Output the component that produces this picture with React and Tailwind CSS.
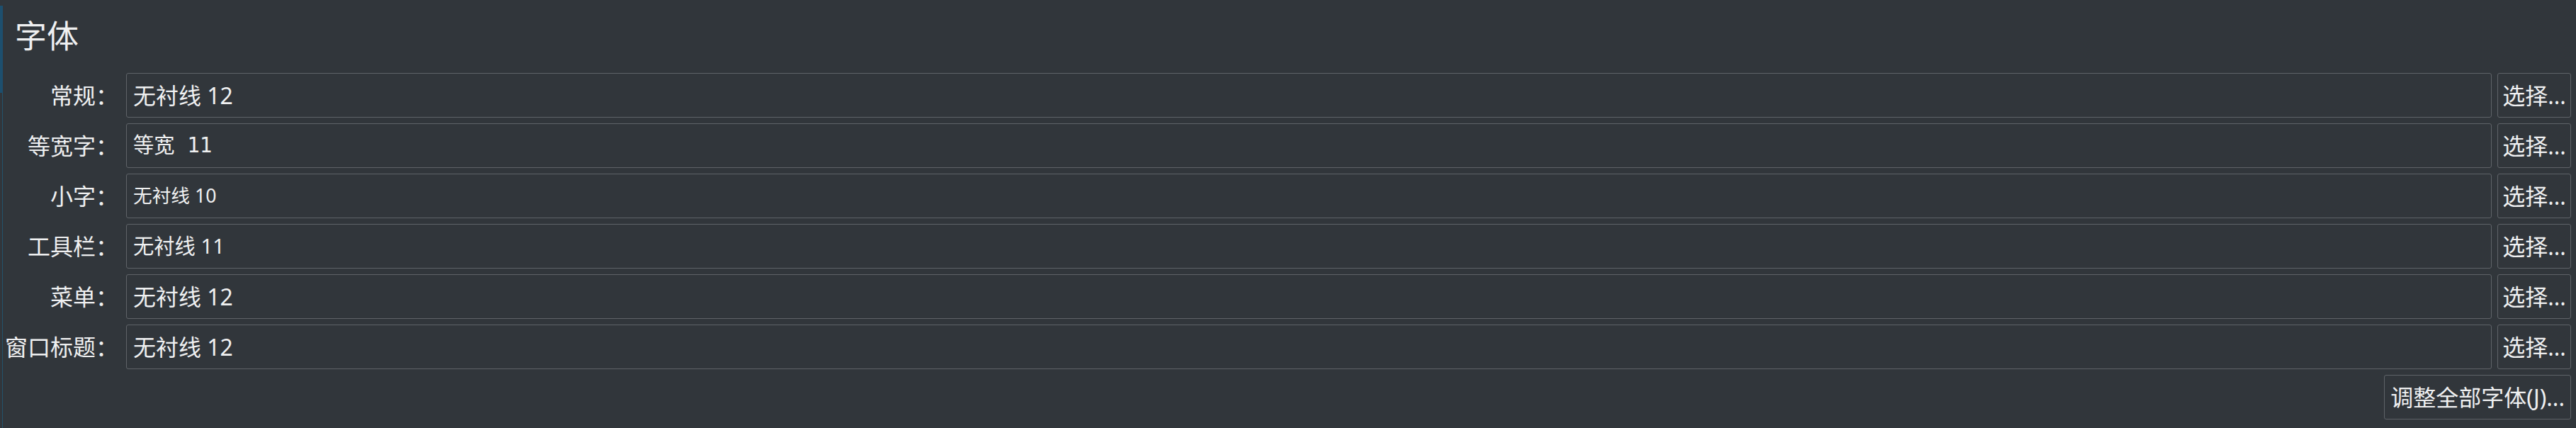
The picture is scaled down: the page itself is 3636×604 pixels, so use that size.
const rows = [
  { label: '常规：', value: '无衬线 12', cls: 'text-[32px]' },
  { label: '等宽字：', value: '等宽 11', cls: 'text-[29.3px] whitespace-pre', mono: true },
  { label: '小字：', value: '无衬线 10', cls: 'text-[26.7px]' },
  { label: '工具栏：', value: '无衬线 11', cls: 'text-[29.3px]' },
  { label: '菜单：', value: '无衬线 12', cls: 'text-[32px]' },
  { label: '窗口标题：', value: '无衬线 12', cls: 'text-[32px]' },
]

const sans = { fontFamily: '"Noto Sans", "Noto Sans CJK SC", sans-serif' }
const mono = { fontFamily: '"DejaVu Sans Mono", "Noto Sans CJK SC", monospace' }

export default function App() {
  return (
    <div className="flex w-full h-[604px] overflow-hidden bg-[#31363b] text-[#eff0f1]" style={sans}>
      {/* selection marker on the left */}
      <div className="flex flex-col w-[4px] shrink-0">
        <div className="h-[8px]" />
        <div className="h-[123px] bg-[#1d4f6e]" />
        <div className="flex-1 border-r border-[#23536b]" />
      </div>

      <div className="flex-1 flex flex-col pt-[20px] pr-[7px]">
        <h1 className="pl-[17px] text-[45px] leading-[61px] font-normal">字体</h1>

        <div className="mt-[22px] grid grid-cols-[166px_1fr_104px] gap-x-[8px] gap-y-[8px]">
          {rows.map((r) => (
            <div key={r.label} className="contents">
              <div className="h-[63px] flex items-center justify-end pr-[3px] text-[32px] whitespace-nowrap">
                {r.label}
              </div>
              <div className="h-[63px] flex items-center pl-[9px] border border-[#5f6368] rounded-[3px]">
                <span className={r.cls} style={r.mono ? mono : sans}>{r.value}</span>
              </div>
              <button className="h-[63px] flex items-center justify-center border border-[#5f6368] rounded-[3px] text-[32px] whitespace-nowrap">
                选择...
              </button>
            </div>
          ))}
        </div>

        <div className="mt-[8px] flex justify-end">
          <button className="h-[63px] px-[8px] flex items-center border border-[#5f6368] rounded-[3px] text-[32px] whitespace-nowrap">
            调整全部字体(J)...
          </button>
        </div>
      </div>
    </div>
  )
}
